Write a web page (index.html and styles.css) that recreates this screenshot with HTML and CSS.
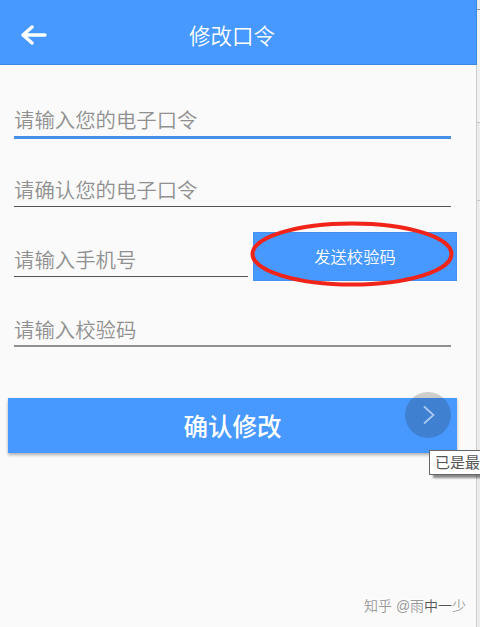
FILE: index.html
```
<!DOCTYPE html>
<html lang="zh-CN">
  <head>
    <meta charset="utf-8">
    <title>修改口令</title>
    <link rel="stylesheet" href="styles.css">
  </head>
  <body>
    <div class="page">
      <div class="phone">
        <header class="header">
          <svg class="back" width="26" height="20" viewBox="0 0 26 20">
            <path d="M11 2L2 10l9 8M2.500 10H24"/>
          </svg>
          <h1 class="title">修改口令</h1>
        </header>
        <form class="form">
          <div class="field active">请输入您的电子口令</div>
          <div class="field">请确认您的电子口令</div>
          <div class="row">
            <div class="field phone-field">请输入手机号</div>
            <div class="send">发送校验码
              <!-- 红色圈注 -->
              <svg class="mark" width="204" height="66" viewBox="0 0 204 66">
                <ellipse cx="102" cy="33" rx="99.500" ry="30.500"/>
              </svg>
            </div>
          </div>
          <div class="field last">请输入校验码</div>
          <div class="submit">确认修改
            <!-- 下一张 -->
            <div class="next">
              <svg width="46" height="46" viewBox="0 0 46 46">
                <path d="M19 14.500l9.500 8.500L19 31.500"/>
              </svg>
            </div>
          </div>
        </form>
        <div class="watermark">知乎 @雨<span class="dark">中一</span>少</div>
      </div>
      <div class="side">
        <div class="side-top"></div>
        <div class="side-mid"></div>
        <div class="side-bottom"></div>
      </div>
      <div class="tip">已是最</div>
    </div>
  </body>
</html>
```
FILE: styles.css
```
* {
    margin: 0;
    padding: 0;
    box-sizing: border-box;
}
body {
    font-family: "Liberation Sans", "Noto Sans CJK SC", sans-serif;
    background-color: #fafafa;
    overflow: hidden;
}
.page {
    position: relative;
    display: flex;
    width: 480px;
    height: 627px;
    overflow: hidden;
}
.phone {
    position: relative;
    width: 477px;
    background-color: #fafafa;
    border-right: 1px solid #ccc;
}
.header {
    display: flex;
    align-items: center;
    width: 477px;
    height: 65px;
    padding: 6px 0 0 21px;
    background-color: #4799ff;
    border-bottom: 1px solid #3e87e0;
    border-right: 1px solid #3e87e0;
    color: #fff;
}
.back {
    fill: none;
    stroke: #fff;
    stroke-width: 3.400;
    stroke-linecap: round;
    stroke-linejoin: round;
}
.title {
    margin: 4px 0 0 142px;
    font-size: 21.500px;
    line-height: 32px;
    font-weight: 350;
}
.form {
    padding: 34px 19px 0 8px;
}
.field {
    width: 437px;
    height: 39px;
    margin: 0 0 31px 6px;
    border-bottom: 1px solid #555;
    color: #909090;
    font-size: 20.400px;
    line-height: 46px;
    font-weight: 350;
    white-space: nowrap;
}
.field.active {
    height: 40px;
    margin-bottom: 29px;
    border-bottom: 3px solid #458fea;
    line-height: 45px;
}
.row {
    display: flex;
    align-items: flex-start;
    height: 70px;
}
.phone-field {
    width: 234px;
    margin-right: 5px;
}
.send {
    position: relative;
    width: 204px;
    height: 49px;
    margin-top: -6px;
    background-color: #4799ff;
    border: 1px solid #4590ee;
    color: #fff;
    font-size: 16.300px;
    line-height: 48px;
    font-weight: 350;
    text-align: center;
}
.mark {
    position: absolute;
    top: -12px;
    left: -4px;
    fill: none;
    stroke: #f02418;
    stroke-width: 4;
}
.field.last {
    border-bottom: 2px solid #918f8f;
}
.submit {
    position: relative;
    width: 449px;
    height: 55px;
    margin-top: 51px;
    background-color: #4799ff;
    box-shadow: 0 2px 3px rgba(0, 0, 0, .3);
    color: #fff;
    font-size: 24.500px;
    line-height: 59px;
    font-weight: 500;
    text-align: center;
}
.next {
    position: absolute;
    top: -6px;
    left: 397px;
    width: 46px;
    height: 46px;
    border-radius: 50%;
    background-color: rgba(40, 40, 40, .21);
}
.next svg {
    display: block;
    fill: none;
    stroke: #a9caf2;
    stroke-width: 1.700;
}
.tip {
    position: absolute;
    top: 450px;
    left: 429px;
    width: 60px;
    height: 25px;
    padding: 0 5px;
    border: 1px solid #666;
    background-color: #fff;
    box-shadow: 4px 3px 2px rgba(0, 0, 0, .45);
    color: #555;
    font-size: 15px;
    line-height: 24px;
    white-space: nowrap;
}
.watermark {
    position: absolute;
    top: 595px;
    left: 364px;
    color: #999;
    font-size: 14px;
    line-height: 22px;
    font-weight: 350;
    white-space: nowrap;
    text-shadow: -1px -1px 0 #fff;
}
.watermark .dark {
    color: #555;
}
.side {
    width: 3px;
    background-color: #ececec;
}
.side-top {
    height: 10px;
    border-bottom: 1px solid #999;
}
.side-mid {
    height: 113px;
    background-color: #f1f1f1;
    border-bottom: 1px solid #c8c8c8;
}
.side-bottom {
    height: 78px;
    border-bottom: 1px solid #ccc;
}
```
